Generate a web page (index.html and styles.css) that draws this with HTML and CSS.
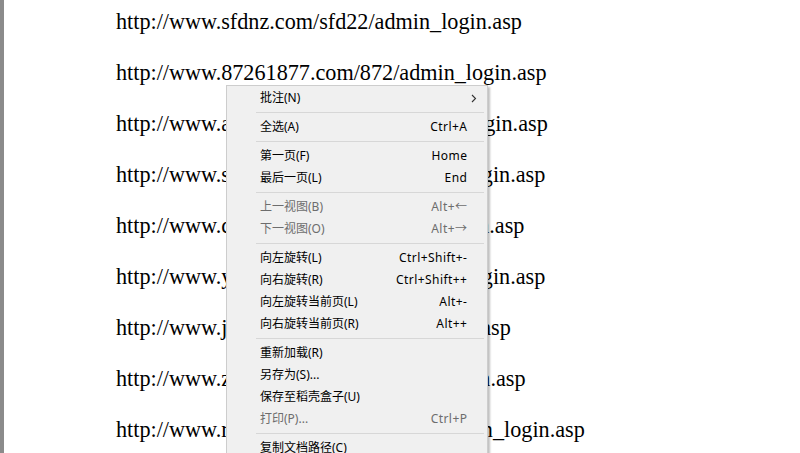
FILE: index.html
```html
<!DOCTYPE html>
<html lang="zh-CN">
<head>
<meta charset="utf-8">
<title>PDF</title>
<link rel="stylesheet" href="styles.css">
</head>
<body>
<div class="page">
  <div class="lines">
    <p class="url">http://www.sfdnz.com/sfd22/admin_login.asp</p>
    <p class="url">http://www.87261877.com/872/admin_login.asp</p>
    <p class="url">http://www.abcdef877.com/abc/admin_login.asp</p>
    <p class="url">http://www.sxyzwq12.com/sxy/admin_login.asp</p>
    <p class="url">http://www.cdnzs.com/cdni2/admin_login.asp</p>
    <p class="url">http://www.yzmnop5.com/yzm/admin_login.asp</p>
    <p class="url">http://www.jklmn.com/jkl2/admin_login.asp</p>
    <p class="url">http://www.zzhxr.com/zzh22/admin_login.asp</p>
    <p class="url">http://www.rstuvwxy2018.com/rstu/admin_login.asp</p>
  </div>
</div>
<div class="menu">
  <div class="item"><span class="label">批注(N)</span><svg class="chev" width="6" height="9" viewBox="0 0 6 9"><path d="M1 1 L4.5 4.5 L1 8" fill="none" stroke="#333" stroke-width="1.1"/></svg></div>
  <div class="sep"></div>
  <div class="item"><span class="label">全选(A)</span><span class="key">Ctrl+A</span></div>
  <div class="sep"></div>
  <div class="item"><span class="label">第一页(F)</span><span class="key">Home</span></div>
  <div class="item"><span class="label">最后一页(L)</span><span class="key">End</span></div>
  <div class="sep"></div>
  <div class="item disabled"><span class="label">上一视图(B)</span><span class="key">Alt+←</span></div>
  <div class="item disabled"><span class="label">下一视图(O)</span><span class="key">Alt+→</span></div>
  <div class="sep"></div>
  <div class="item"><span class="label">向左旋转(L)</span><span class="key">Ctrl+Shift+-</span></div>
  <div class="item"><span class="label">向右旋转(R)</span><span class="key">Ctrl+Shift++</span></div>
  <div class="item"><span class="label">向左旋转当前页(L)</span><span class="key">Alt+-</span></div>
  <div class="item"><span class="label">向右旋转当前页(R)</span><span class="key">Alt++</span></div>
  <div class="sep"></div>
  <div class="item"><span class="label">重新加载(R)</span></div>
  <div class="item"><span class="label">另存为(S)...</span></div>
  <div class="item"><span class="label">保存至稻壳盒子(U)</span></div>
  <div class="item disabled"><span class="label">打印(P)...</span><span class="key">Ctrl+P</span></div>
  <div class="sep"></div>
  <div class="item"><span class="label">复制文档路径(C)</span></div>
</div>
</body>
</html>
```

FILE: styles.css
```css
html, body {
  margin: 0;
  padding: 0;
  height: 100%;
  background: #ffffff;
  overflow: hidden;
}

.page {
  height: 100%;
  border-left: 4px solid #8b8b8b;
  box-sizing: border-box;
}

.lines {
  padding-left: 112px;
  padding-top: 8px;
  display: flex;
  flex-direction: column;
}

.url {
  margin: 0;
  height: 51px;
  line-height: 28px;
  font-family: "Liberation Serif", "Times New Roman", serif;
  font-size: 22.2px;
  color: #000;
  white-space: nowrap;
}

.menu {
  position: absolute;
  left: 226px;
  top: 85px;
  width: 260px;
  background: #f0f0f0;
  border: 1px solid #cdcdcd;
  box-shadow: 2px 2px 2px rgba(0, 0, 0, 0.25);
  padding: 1px 0 0 0;
  font-family: "Noto Sans", "Noto Sans CJK SC", sans-serif;
  font-size: 12px;
  color: #000;
}

.item {
  height: 22px;
  display: flex;
  align-items: center;
  justify-content: space-between;
  padding: 0 20px 0 33px;
  line-height: 22px;
  white-space: nowrap;
}

.item.disabled {
  color: #6d6d6d;
}

.key {
  letter-spacing: 0.45px;
  margin-right: -0.45px;
}

.chev {
  margin-right: -10px;
}

.sep {
  height: 1px;
  background: #d7d7d7;
  margin: 3px 3px 3px 29px;
}
```
